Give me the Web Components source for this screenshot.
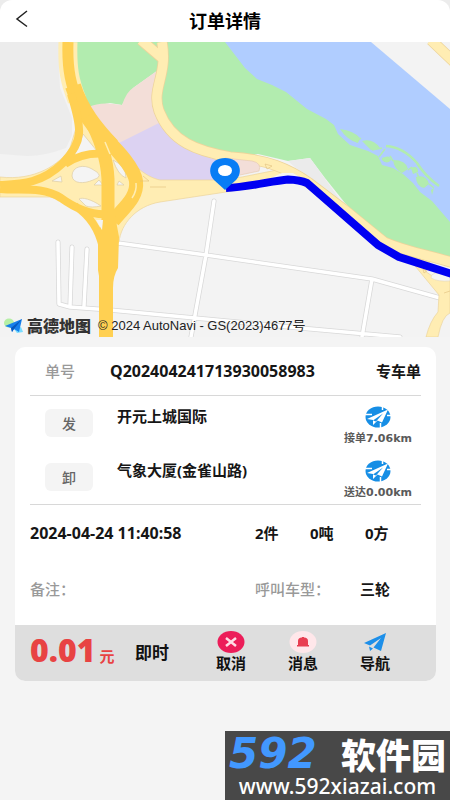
<!DOCTYPE html>
<html lang="zh-CN">
<head>
<meta charset="utf-8">
<meta name="viewport" content="width=device-width, initial-scale=1">
<title>订单详情</title>
<style>
  body { margin: 0; background: #f4f4f4; color: #161616; font-family: "Noto Sans", "Noto Sans CJK SC", sans-serif; font-size: 15px; line-height: 20px; }
</style>
</head>
<body>
<order-page></order-page>

<template id="t-page">
  <style>
    :host { display: flex; flex-direction: column; min-height: 100vh; }
    order-card { margin: 10px 14px 50px 15px; }
    site-mark { margin-top: auto; align-self: flex-end; }
  </style>
  <page-header>订单详情</page-header>
  <route-map></route-map>
  <order-card></order-card>
  <site-mark></site-mark>
</template>

<template id="t-header">
  <style>
    :host { display: block; background: #ececec; }
    header { display: grid; grid-template-columns: 48px 1fr 48px; align-items: center; height: 42px; background: #fff; border-radius: 12px 12px 0 0; }
    button { border: 0; background: none; padding: 0 0 4px 14px; height: 36px; text-align: left; }
    svg { display: block; }
    h1 { margin: 0; font-size: 18px; line-height: 26px; text-align: center; font-weight: 700; color: #000; }
  </style>
  <header>
    <button aria-label="返回"><svg width="16" height="18" viewBox="0 0 16 18"><path d="M13 1L3 9l10 7.500" fill="none" stroke="#222" stroke-width="1.500"/></svg></button>
    <h1><slot></slot></h1>
  </header>
</template>

<template id="t-map">
  <style>
    :host { display: block; position: relative; overflow: hidden; background: #f3f3f3; }
    .map { display: block; width: 100%; }
    .credit { position: absolute; left: 4px; bottom: 0; display: flex; align-items: center; height: 22px; color: #333; }
    .credit svg { width: 20px; height: 16px; margin-right: 3px; }
    b { font-size: 16px; font-weight: 900; color: #333; margin-right: 7px; }
    small { font: 13px/20px "Liberation Sans", "Noto Sans CJK SC", sans-serif; color: #222; white-space: nowrap; }
  </style>
  <svg class="map" viewBox="0 42 450 295" role="img" aria-label="路线地图">
    <path fill="#ececec" d="M0 42H62L59 70 60 88 72 118 72 135 66 148Q45 156 27 156L0 154Z"/>
    <path fill="#b0cdff" d="M220 42H371L450 109V240L300 150Z"/>
    <path fill="#b2ecaf" d="M70 42H225L245 68 257 79 272 85 286 92 307 109 326 119 334 125 338 134 350 145 368 151 378 156 382 165 393 168 403 174 413 183 420 192 432 201 450 222V258L410 250 380 238 345 203 325 178 310 158 288 161 258 154 230 160 165 130 157 71 133 88 122 105 110 103 90 107 77 80Z"/>
    <path fill="#ebebeb" d="M288 161L310 158 346 208 335 206 305 176Z"/>
    <path fill="#f3ded8" d="M89 107Q100 101 122 105Q127 91 133 88L158 70V105L166 122 118 144Z"/>
    <path fill="#dcd2f2" d="M117 144L163 121 180 142 210 158 235 163V182H155L140 172Z"/>
    <g fill="none" stroke-linejoin="round">
      <path stroke="#d8d8d8" stroke-width="5" stroke-linecap="round" d="M118 243L206 255 372 279 440 298M214 201L206 255 191 337M372 279L362 337M58 242L59 304 70 307 110 310 195 318 300 328 400 337M72 247L70 306M87 249L84 306"/>
      <path stroke="#fff" stroke-width="3.500" stroke-linecap="round" d="M118 243L206 255 372 279 440 298M214 201L206 255 191 337M372 279L362 337M58 242L59 304 70 307 110 310 195 318 300 328 400 337M72 247L70 306M87 249L84 306"/>
    </g>
    <path fill="none" stroke="#ffedb3" stroke-width="19" d="M68 42C67 70 70 82 77 100"/>
    <path fill="#ffedb3" stroke="#edd49b" stroke-width="0.700" d="M0 177C34 181 60 165 70 148L79 118 100 134 117 144C130 163 145 177 160 180H214L242 177 282 169 305 180 290 179 226 192 160 202C136 206 121 224 119 242L100 250C94 218 78 202 50 197L0 197Z"/>
    <path fill="none" stroke="#edd49b" stroke-width="11" d="M162 42C168 76 151 88 159 111C171 142 197 151 230 157C267 159 289 169 309 183L346 211 384 242C407 252 428 255 454 263M141 40L162 58M431 40L454 62"/>
    <path fill="none" stroke="#ffedb3" stroke-width="9.500" d="M162 42C168 76 151 88 159 111C171 142 197 151 230 157C267 159 289 169 309 183L346 211 384 242C407 252 428 255 454 263M141 40L162 58M431 40L454 62"/>
    <path fill="#ffedb3" stroke="#edd49b" stroke-width=".700" d="M406 255L430 262 425 271Q437 281 450 279V313Q442 316 438 337H426Q430 321 438 312L439 295Z"/>
    <path fill="#f4f4f4" stroke="#e2d2ac" stroke-width=".500" d="M431 278Q430 270 450 275V281Q438 282 431 278"/>
    <path fill="#f4f4f4" d="M262 182L282 173 293 173 301 178 290 181Z"/>
    <path fill="#f3ded8" stroke="#e5c8ad" stroke-width=".600" d="M225 158L252 161Q262 163 259 171L240 175 225 177Z"/>
    <path fill="none" stroke="#e0bf7e" stroke-width=".600" d="M265 164L272 166 267 169Z"/>
    <path fill="#f4f4f4" stroke="#decda4" stroke-width=".700" d="M72 176C72 166 84 164 92 169Q106 176 93 180C84 184 73 184 72 176M79 199C82 197 91 199 101 206Q91 208 86 206ZM83 134L97 151Q82 152 69 163C77 151 80 144 83 134ZM113 160Q126 166 126 178Q118 175 113 160M52 181L61 176 62 182ZM94 185L99 180 103 185ZM117 185L119 181 124 185Z"/>
    <g fill="none" stroke="#ffd052">
      <path stroke-width="11" d="M68 42C67 70 71 86 79 104"/>
      <path stroke-width="16" d="M73 86C81 111 96 129 112 146"/>
      <path stroke-width="13" d="M88 116C101 139 107 158 108 179L108 240"/>
      <path stroke-width="14" d="M106 139C119 152 134 168 136 181C138 198 123 208 113 221"/>
      <path stroke-width="8" d="M71 94C82 129 84 141 63 163C41 184 21 184 0 185M0 189C20 191 42 186 61 198C79 211 96 215 108 214M65 164C78 155 91 152 108 154M75 206Q97 220 103 248"/>
    </g>
    <path fill="#ffd052" d="M98 235L103 215H115L119 237 118 268Q113 276 113 288V337H99V276L98 270Z"/>
    <path fill="none" stroke="#ffedb3" stroke-width="1.500" d="M105 142L110 154M136 183Q137 191 132 198"/>
    <path fill="#f4f4f4" d="M96 220L103 220 102 230Z"/>
    <path fill="none" stroke="#e0bf7e" stroke-width=".600" d="M143 176L149 181H140M150 187H166M423 269L427 271 424 273ZM444 293L450 291"/>
    <g fill="#b2ecaf">
      <path d="M340 129Q354 131 360 138L358 143Q347 140 340 129M362 141Q373 138 380 148L371 150ZM382 158Q390 154 391 160 387 165 382 160M393 160Q406 160 408 169L402 173Q394 169 393 160M411 168Q418 165 418 172L413 174M416 177Q426 174 429 184L424 188Q416 186 416 177M431 190L434 188 432 195"/>
      <path fill="none" stroke="#b2ecaf" stroke-width="2.500" d="M386 146Q403 147 417 163 425 176 439 186"/>
      <path fill="none" stroke="#b2ecaf" stroke-width="1.500" d="M356 142L361 138M372 150L382 148M379 157L385 149M390 156L393 161M408 170L412 167M417 173L419 178M429 184L434 188"/>
    </g>
    <path fill="none" stroke="#0000f2" stroke-width="8" stroke-linejoin="round" d="M226 188C250 187 271 181 288 179.500Q300 180 307 183L378 245 399 257 452 274"/>
    <path fill="#087cf5" d="M225 190L214 180C207 173 209 158 225 158S243 173 236 180Z"/>
    <ellipse cx="225" cy="170.500" rx="7" ry="5.500" fill="#fff"/>
  </svg>
  <div class="credit">
    <svg viewBox="0 0 20 16"><ellipse cx="5" cy="5" rx="5" ry="4.500" fill="#b5efa5"/><path d="M10 11L17 9 19 14 13 15Z" fill="#78dcff"/><path d="M1 8L18 1 15 14 10 11 8 14 7 10Z" fill="#1680ec"/><path d="M7 10L18 1 10 11 8 14Z" fill="#0758bf"/></svg>
    <b>高德地图</b><small>© 2024 AutoNavi - GS(2023)4677号</small>
  </div>
</template>

<template id="t-card">
  <style>
    :host { display: block; background: #fff; border-radius: 10px; overflow: hidden; font-weight: 700; }
    .body { padding: 0 15px; }
    .row { display: grid; align-items: center; }
    .no { grid-template-columns: 65px 1fr auto; padding-left: 15px; height: 48px; border-bottom: 1px solid #d8d8d8; }
    .no, .facts { font-size: 15px; }
    .num { font-size: 16px; }
    .muted { color: #999; font-weight: 500; }
    .stops { border-bottom: 1px solid #d8d8d8; }
    .facts { grid-template-columns: 1fr 55px 55px 56px; height: 56px; }
    .notes { grid-template-columns: 1fr 105px 61px; height: 56px; padding-bottom: 8px; }
  </style>
  <div class="body">
    <div class="row no"><span class="muted">单号</span><span class="num">Q202404241713930058983</span><span>专车单</span></div>
    <div class="stops">
      <stop-row tag="发" distance="接单7.06km">开元上城国际</stop-row>
      <stop-row tag="卸" distance="送达0.00km">气象大厦(金雀山路)</stop-row>
    </div>
    <div class="row facts"><span class="num">2024-04-24 11:40:58</span><span>2件</span><span>0吨</span><span>0方</span></div>
    <div class="row notes"><span class="muted">备注：</span><span class="muted">呼叫车型：</span><span>三轮</span></div>
  </div>
  <order-bar></order-bar>
</template>

<template id="t-stop">
  <style>
    :host { display: grid; grid-template-columns: 48px 1fr 86px; column-gap: 24px; padding: 10px 0 0 15px; height: 44px; }
    .tag { height: 28px; margin-top: 3px; border-radius: 6px; background: #f4f4f4; color: #666; text-align: center; font: 500 14px/28px "Noto Sans CJK SC", sans-serif; }
    .go { border: 0; padding: 0; background: none; display: flex; flex-direction: column; align-items: center; color: #5a5a5a; font: 700 11px/16px "DejaVu Sans", "Noto Sans CJK SC", sans-serif; white-space: nowrap; }
    .go svg { display: block; margin-bottom: 3px; }
  </style>
  <span class="tag"></span><span><slot></slot></span>
  <button class="go">
    <svg width="26" height="22" viewBox="0 0 26 22"><ellipse cx="13" cy="11" rx="12.500" ry="10.500" fill="#168ee5"/><path d="M0 8.500H7M17.500 0V4M26 9.500H22M15.500 22V17" stroke="#fff" stroke-width="1.500"/><path d="M2 13L23 3.500 17 16.500 12.500 14.500 8 19 8 14Z" fill="#fff"/><path d="M8 14.500L18 7.500 11 15.500" fill="#168ee5"/></svg>
    <span class="distance"></span>
  </button>
</template>

<template id="t-bar">
  <style>
    :host { display: grid; grid-template-columns: 105px 1fr 72px 72px 72px; align-items: center; height: 56px; padding: 0 25px 0 15px; background: #dedede; color: #111; }
    .price { display: flex; align-items: baseline; color: #e84343; line-height: 36px; white-space: nowrap; }
    .price b { font-size: 32px; margin-right: 4px; }
    .kind { font-size: 17px; }
    action-button { margin-top: -2px; }
  </style>
  <span class="price"><b>0.01</b>元</span>
  <span class="kind">即时</span>
  <action-button>
    <svg slot="icon" width="28" height="22" viewBox="0 0 28 22"><ellipse cx="14" cy="11" rx="13.500" ry="11" fill="#ec1d59"/><path d="M9 7L19 15M19 7L9 15" stroke="#ffdce5" stroke-width="2.500"/></svg>取消
  </action-button>
  <action-button>
    <svg slot="icon" width="28" height="22" viewBox="0 0 28 22"><ellipse cx="14" cy="11" rx="13.500" ry="11" fill="#ffe7ea"/><path d="M9 14V10Q9 6.500 13 6.500V6H15V6.500Q19 6.500 19 10V14H20V15.500H8V14Z" fill="#e83e51"/></svg>消息
  </action-button>
  <action-button>
    <svg slot="icon" width="28" height="22" viewBox="0 0 28 22"><path d="M3 12L25 2 20 20 12.500 16.500 20 7 9 14.500ZM8 15.500L12 17.500 9 20Z" fill="#1d8fe9"/></svg>导航
  </action-button>
</template>

<template id="t-action">
  <style>
    :host { display: block; }
    button { border: 0; background: none; padding: 0; width: 100%; display: flex; flex-direction: column; align-items: center; color: inherit; font: inherit; line-height: 20px; }
    ::slotted(svg) { display: block; }
  </style>
  <button><slot name="icon"></slot><span><slot></slot></span></button>
</template>

<template id="t-mark">
  <style>
    :host { display: block; box-sizing: border-box; width: 225px; padding: 4px 4px 2px; background: #484848; color: #fff; white-space: nowrap; }
    .name { display: flex; justify-content: space-between; align-items: center; height: 38px; font: 900 35px/38px "Noto Sans CJK SC", sans-serif; }
    .name b { color: #4298ff; font: italic 700 42px/38px "DejaVu Sans", sans-serif; }
    .url { text-align: center; font: 500 21px/26px "Noto Sans", sans-serif; }
  </style>
  <div class="name"><b>592</b><span>软件园</span></div>
  <div class="url">www.592xiazai.com</div>
</template>

<script>
  class Base extends HTMLElement {
    constructor() {
      super();
      this.attachShadow({ mode: "open" }).append(
        document.getElementById(this.constructor.template).content.cloneNode(true));
    }
  }
  const define = (name, template) =>
    customElements.define(name, class extends Base { static template = template; });

  class StopRow extends Base {
    static template = "t-stop";
    connectedCallback() {
      this.shadowRoot.querySelector(".tag").textContent = this.getAttribute("tag");
      this.shadowRoot.querySelector(".distance").textContent = this.getAttribute("distance");
    }
  }
  customElements.define("stop-row", StopRow);
  define("action-button", "t-action");
  define("order-bar", "t-bar");
  define("order-card", "t-card");
  define("page-header", "t-header");
  define("route-map", "t-map");
  define("site-mark", "t-mark");
  define("order-page", "t-page");
</script>
</body>
</html>
